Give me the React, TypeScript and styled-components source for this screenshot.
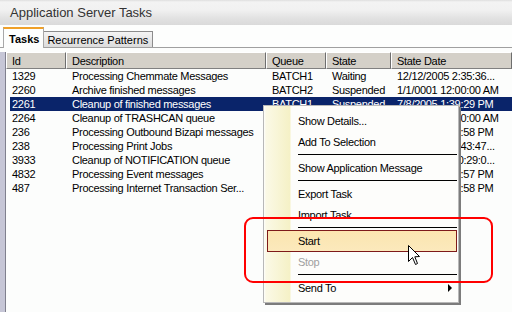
import React from "react";
import styled, { createGlobalStyle } from "styled-components";

const GlobalStyle = createGlobalStyle`
  html, body {
    margin: 0;
    padding: 0;
    background: #fcfdfc;
  }
  body {
    font-family: "Liberation Sans", Arial, sans-serif;
    font-size: 11px;
    color: #000;
  }
`;

const Window = styled.div`
  position: relative;
  width: 512px;
  height: 312px;
  overflow: hidden;
  display: flex;
  flex-direction: column;
  background: #fcfdfc;
`;

const TitleBar = styled.div`
  height: 25px;
  flex: none;
  display: flex;
  align-items: center;
  padding-left: 10px;
  font-size: 13px;
  color: #333;
  background: linear-gradient(
    to bottom,
    #dedede 0px,
    #f3f3f3 2px,
    #f1f1f1 10px,
    #e2e2e2 18px,
    #dadada 25px
  );
`;

const TabStrip = styled.div`
  height: 22px;
  flex: none;
  display: flex;
  align-items: flex-end;
  padding-left: 3px;
  background: #fdfefd;
  border-bottom: 1px solid #a0a0a0;
`;

const Tab = styled.div<{ $active?: boolean }>`
  display: flex;
  align-items: center;
  box-sizing: border-box;
  white-space: nowrap;
  ${(p) =>
    p.$active
      ? `
    height: 21px;
    margin-bottom: -1px;
    padding: 0 4px 0 5px;
    font-weight: bold;
    background: #fdfefd;
    border: 1px solid #a8a8a8;
    border-top: 2px solid #f0a028;
    border-bottom: none;
  `
      : `
    height: 16px;
    padding: 0 4px 0 3px;
    background: linear-gradient(to bottom, #f4f4f4, #dcdcdc);
    border: 1px solid #8c8c8c;
    border-bottom: none;
    border-left: none;
  `}
`;

const Body = styled.div`
  flex: 1;
  display: flex;
  padding-top: 4px;
  min-height: 0;
`;

const LeftEdge = styled.div`
  width: 5px;
  flex: none;
  background: #c6c6d6;
  border-right: 1px solid #80808e;
`;

const Grid = styled.div`
  flex: 1;
  display: flex;
  flex-direction: column;
  letter-spacing: -0.3px;
`;

const COLS = "60px 200px 60px 65px 121px";

const HeaderRow = styled.div`
  display: grid;
  grid-template-columns: ${COLS};
  height: 17px;
`;

const HeaderCell = styled.div`
  box-sizing: border-box;
  display: flex;
  align-items: center;
  padding-left: 5px;
  background: #d4d0c8;
  border-top: 1px solid #ffffff;
  border-left: 1px solid #ffffff;
  border-right: 1px solid #6e6e6e;
  border-bottom: 1px solid #808080;
  white-space: nowrap;
  overflow: hidden;
`;

const Row = styled.div<{ $selected?: boolean }>`
  display: grid;
  grid-template-columns: ${COLS};
  height: 14px;
  color: ${(p) => (p.$selected ? "#ffffff" : "#000")};
  background: ${(p) =>
    p.$selected
      ? "linear-gradient(90deg, transparent 4px, #0a246a 4px)"
      : "transparent"};
`;

const Cell = styled.div`
  padding-left: 6px;
  line-height: 14px;
  white-space: nowrap;
  overflow: hidden;
`;

const Menu = styled.div`
  position: absolute;
  left: 263px;
  top: 105px;
  width: 196px;
  box-sizing: border-box;
  padding: 4px 1px 4px 2px;
  letter-spacing: -0.3px;
  background: linear-gradient(
    90deg,
    #fdfdfb 0px,
    #fbf9e6 2px,
    #f5f1c6 26px,
    #fdfdfb 27px
  );
  border: 1px solid #b8b8b8;
  box-shadow: 2px 2px 0 #7c7c7c;
`;

const MenuItem = styled.div<{ $hot?: boolean; $disabled?: boolean }>`
  position: relative;
  box-sizing: border-box;
  height: 21px;
  display: flex;
  align-items: center;
  padding-left: 31px;
  margin-left: 1px;
  color: ${(p) => (p.$disabled ? "#a0a0a0" : "#000")};
  ${(p) =>
    p.$hot &&
    `
    height: 22px;
    margin-bottom: -1px;
    background: linear-gradient(to bottom, #fde6b0, #fbe7b6 50%, #fce9bc);
    border: 1px solid #7e1a1a;
    padding-left: 30px;
  `}
`;

const Separator = styled.div`
  height: 1px;
  margin: 2px 0 2px 32px;
  background: #000;
`;

const SubArrow = styled.span`
  position: absolute;
  right: 5px;
  top: 7px;
  width: 0;
  height: 0;
  border-top: 4px solid transparent;
  border-bottom: 4px solid transparent;
  border-left: 4px solid #000;
`;

const Annotation = styled.div`
  position: absolute;
  left: 244px;
  top: 217px;
  width: 249px;
  height: 66px;
  box-sizing: border-box;
  border: 2px solid #ff0000;
  border-radius: 9px;
  pointer-events: none;
`;

const Cursor = styled.svg`
  position: absolute;
  left: 408px;
  top: 245px;
`;

type Task = {
  id: string;
  desc: string;
  queue: string;
  state: string;
  date: string;
  selected?: boolean;
};

const tasks: Task[] = [
  { id: "1329", desc: "Processing Chemmate Messages", queue: "BATCH1", state: "Waiting", date: "12/12/2005 2:35:36..." },
  { id: "2260", desc: "Archive finished messages", queue: "BATCH2", state: "Suspended", date: "1/1/0001 12:00:00 AM" },
  { id: "2261", desc: "Cleanup of finished messages", queue: "BATCH1", state: "Suspended", date: "7/8/2005 1:39:29 PM", selected: true },
  { id: "2264", desc: "Cleanup of TRASHCAN queue", queue: "BATCH1", state: "Suspended", date: "1/1/0001 12:00:00 AM" },
  { id: "236", desc: "Processing Outbound Bizapi messages", queue: "BATCH1", state: "Waiting", date: "7/8/2005 1:46:58 PM" },
  { id: "238", desc: "Processing Print Jobs", queue: "BATCH1", state: "Waiting", date: "12/12/2005 2:43:47..." },
  { id: "3933", desc: "Cleanup of NOTIFICATION queue", queue: "BATCH1", state: "Waiting", date: "12/12/2005 10:29:0..." },
  { id: "4832", desc: "Processing Event messages", queue: "BATCH1", state: "Waiting", date: "7/8/2005 1:46:57 PM" },
  { id: "487", desc: "Processing Internet Transaction Ser...", queue: "BATCH1", state: "Waiting", date: "7/8/2005 1:46:58 PM" },
];

export default function App() {
  return (
    <>
      <GlobalStyle />
      <Window>
        <TitleBar>Application Server Tasks</TitleBar>
        <TabStrip>
          <Tab $active>Tasks</Tab>
          <Tab>Recurrence Patterns</Tab>
        </TabStrip>
        <Body>
          <LeftEdge />
          <Grid>
            <HeaderRow>
              <HeaderCell>Id</HeaderCell>
              <HeaderCell>Description</HeaderCell>
              <HeaderCell>Queue</HeaderCell>
              <HeaderCell>State</HeaderCell>
              <HeaderCell>State Date</HeaderCell>
            </HeaderRow>
            {tasks.map((t) => (
              <Row key={t.id} $selected={t.selected}>
                <Cell>{t.id}</Cell>
                <Cell>{t.desc}</Cell>
                <Cell>{t.queue}</Cell>
                <Cell>{t.state}</Cell>
                <Cell>{t.date}</Cell>
              </Row>
            ))}
          </Grid>
        </Body>

        <Menu>
          <MenuItem>Show Details...</MenuItem>
          <MenuItem>Add To Selection</MenuItem>
          <Separator />
          <MenuItem>Show Application Message</MenuItem>
          <Separator />
          <MenuItem>Export Task</MenuItem>
          <MenuItem>Import Task</MenuItem>
          <Separator />
          <MenuItem $hot>Start</MenuItem>
          <MenuItem $disabled>Stop</MenuItem>
          <Separator />
          <MenuItem>
            Send To
            <SubArrow />
          </MenuItem>
        </Menu>

        <Annotation />

        <Cursor width="13" height="21" viewBox="0 0 13 21">
          <path
            d="M0.5 0.5 L0.5 16.5 L4.5 12.5 L7.5 19.5 L9.5 18.5 L6.8 11.8 L11.5 11.5 Z"
            fill="#ffffff"
            stroke="#000000"
            strokeWidth="1"
          />
        </Cursor>
      </Window>
    </>
  );
}
